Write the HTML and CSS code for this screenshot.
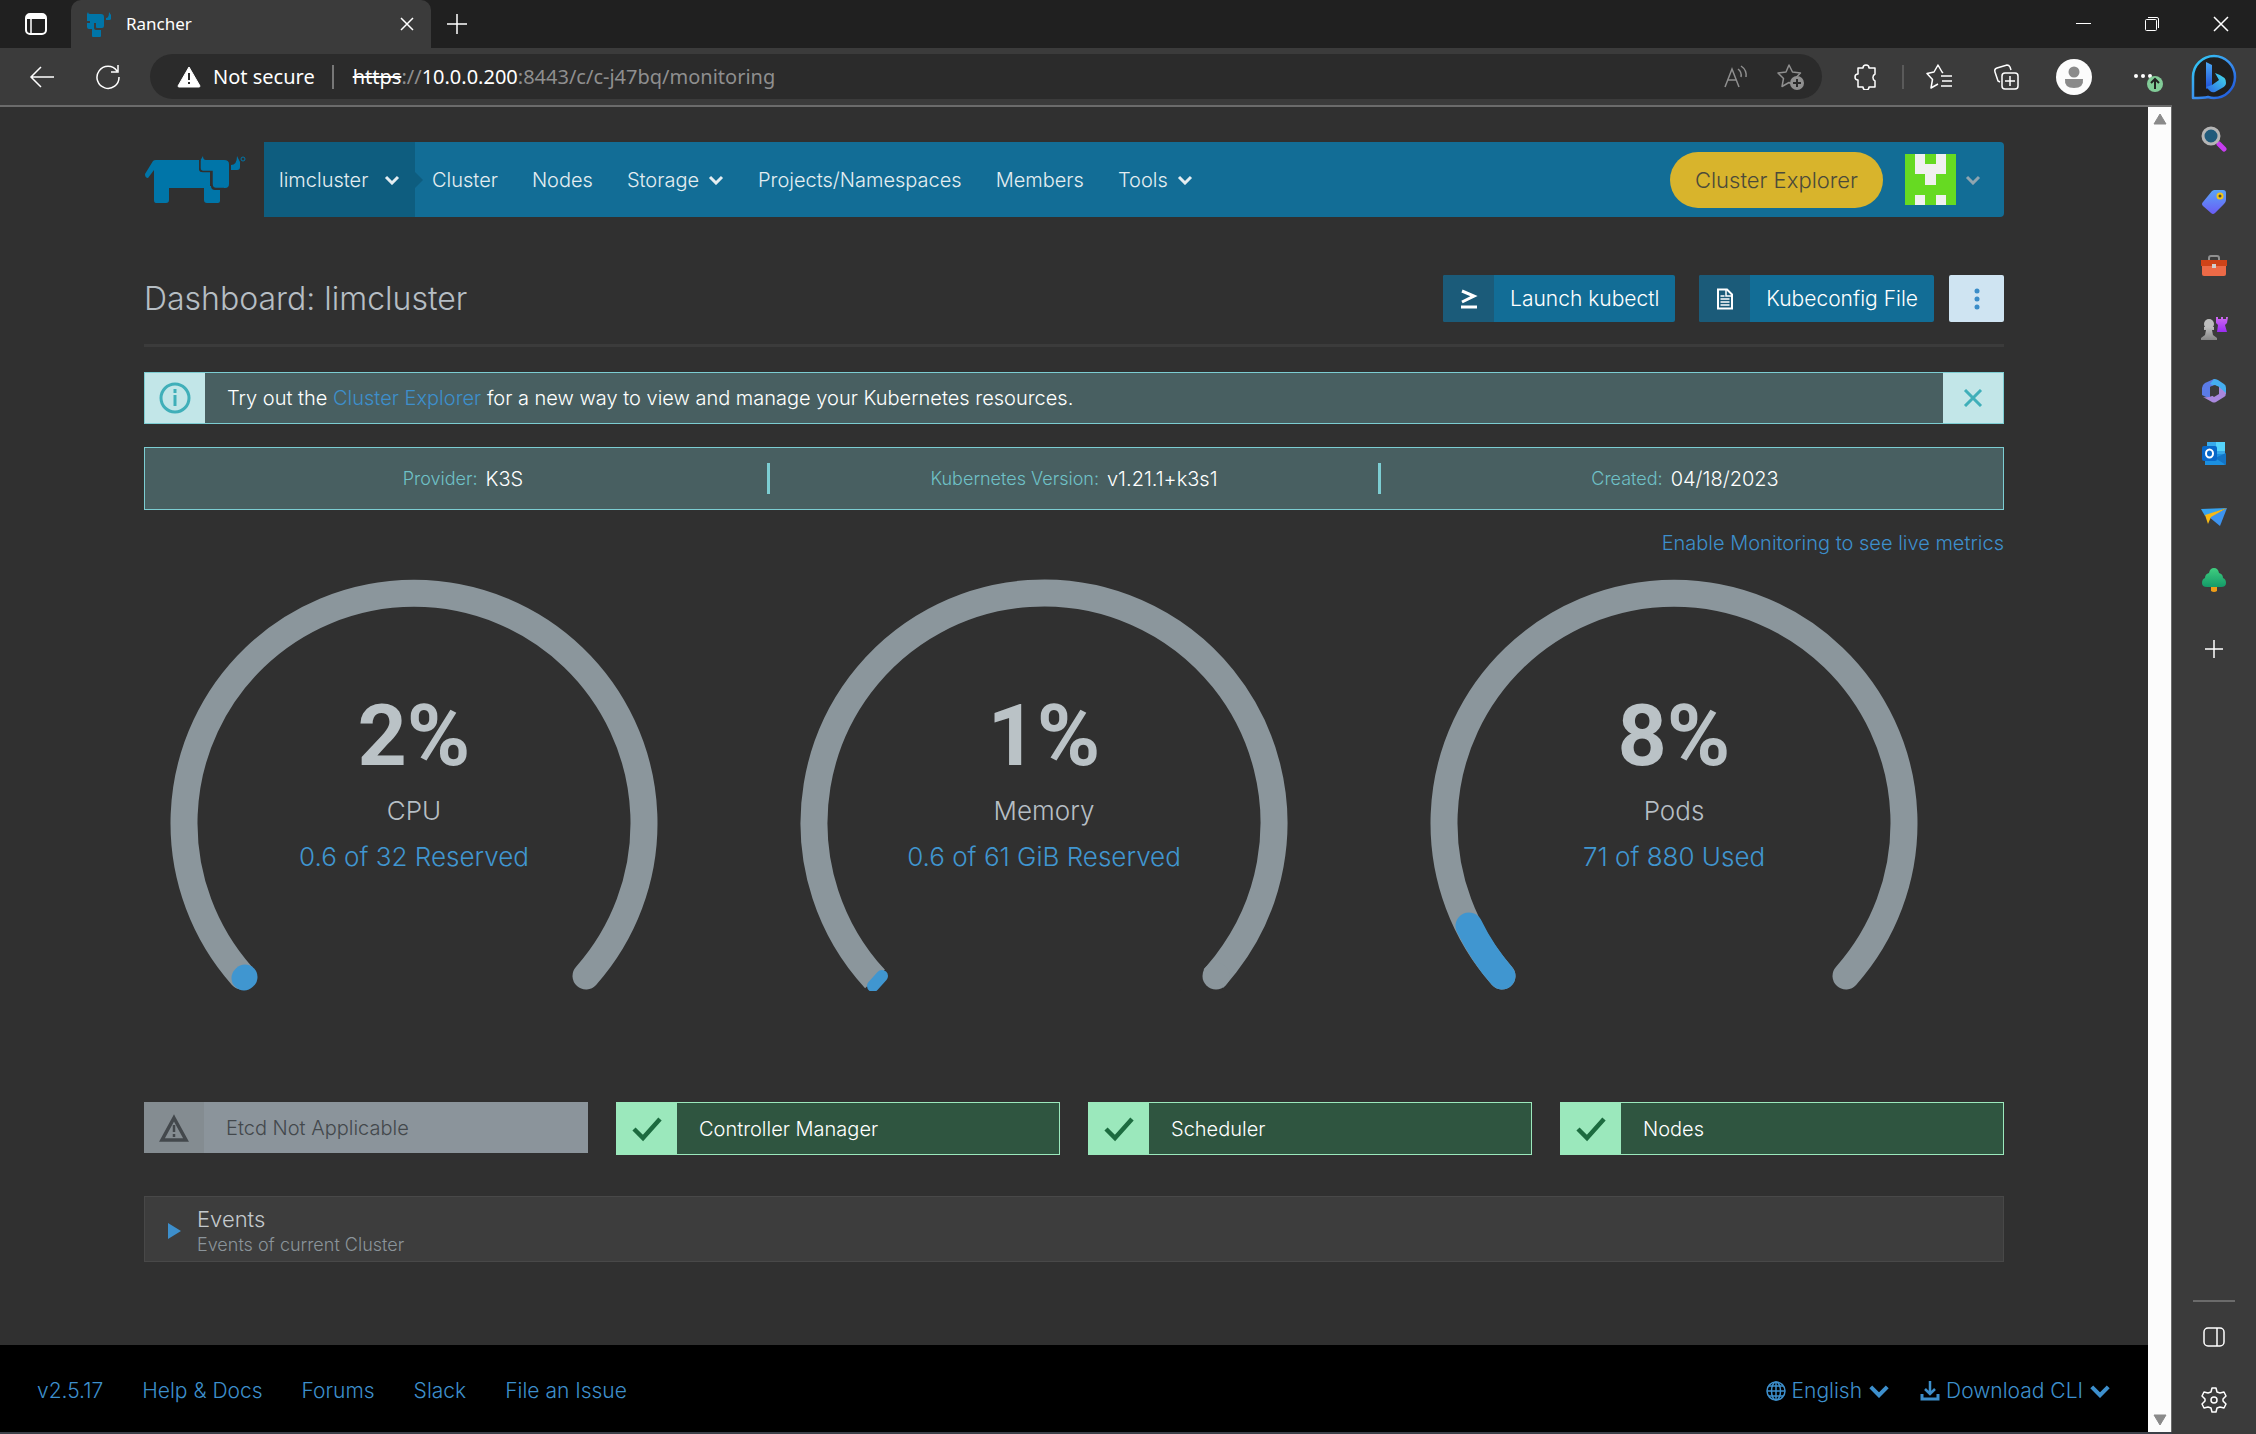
FILE: index.html
```html
<!DOCTYPE html>
<html lang="en">
<head>
<meta charset="utf-8">
<title>Rancher</title>
<link rel="stylesheet" href="styles.css">
</head>
<body>
<svg class="defs" aria-hidden="true">
  <defs>
    <linearGradient id="bing-ring" x1="0" y1="0" x2="1" y2="1"><stop offset="0" stop-color="#2fd0f5"/><stop offset=".5" stop-color="#3b93ef"/><stop offset="1" stop-color="#1a4fd8"/></linearGradient>
    <linearGradient id="bing-b" x1="0" y1="0" x2="0" y2="1"><stop offset="0" stop-color="#4aa8f5"/><stop offset="1" stop-color="#1f4fd6"/></linearGradient>
    <linearGradient id="bing-c" x1="0" y1="1" x2="1" y2="0"><stop offset="0" stop-color="#2a64e6"/><stop offset="1" stop-color="#45e0ea"/></linearGradient>
    <linearGradient id="tag-fill" x1="0" y1="0" x2="0" y2="1"><stop offset="0" stop-color="#5aa4f8"/><stop offset="1" stop-color="#6a5cf5"/></linearGradient>
    <linearGradient id="rook-fill" x1="0" y1="0" x2="0" y2="1"><stop offset="0" stop-color="#cf6bf0"/><stop offset="1" stop-color="#9a2cf2"/></linearGradient>
    <linearGradient id="pawn-fill" x1="0" y1="0" x2="0" y2="1"><stop offset="0" stop-color="#bdbdbd"/><stop offset="1" stop-color="#858585"/></linearGradient>
    <linearGradient id="tree-fill" x1="0" y1="0" x2="0" y2="1"><stop offset="0" stop-color="#3fce7f"/><stop offset="1" stop-color="#149a68"/></linearGradient>
    <symbol id="chevron" viewBox="0 0 16 10"><path d="M2 2l6 6 6-6" fill="none" stroke="currentColor" stroke-width="3"/></symbol>
    <symbol id="check" viewBox="0 0 30 26"><path d="M2 13l9 9L28 3" fill="none" stroke="currentColor" stroke-width="4.500"/></symbol>
  </defs>
</svg>

<header class="tabstrip">
  <button class="icon-btn tab-menu" aria-label="Tab actions"><svg width="22" height="22" viewBox="0 0 22 22"><rect x="1" y="1" width="20" height="20" rx="4" fill="none" stroke="#fff" stroke-width="2"/><path d="M1 2h20v4H1z" fill="#fff"/><path d="M6 6v14" stroke="#fff" stroke-width="1.500"/></svg></button>
  <div class="tab">
    <svg width="25" height="25" viewBox="0 0 25 25" fill="#0075a8"><path d="M2 0q0 2 2 2h11q3 0 3 3v9q0 2-2 2h-5q-1 0-1-1v-4H4V9H1V2z"/><path d="M1 11h7v5q0 2 2 2h5v6q0 1-1 1H7q-1 0-1-1v-7H3q-2 0-2-2z"/><path d="M20 6q3 0 3-6l2 3v4q0 1-2 1h-3z"/></svg>
    <span class="tab-title">Rancher</span>
    <button class="icon-btn" aria-label="Close tab"><svg width="14" height="14" viewBox="0 0 14 14"><path d="M1 1l12 12M13 1L1 13" stroke="#fff" stroke-width="1.500"/></svg></button>
  </div>
  <button class="icon-btn new-tab" aria-label="New tab"><svg width="22" height="22" viewBox="0 0 22 22"><path d="M11 1v20M1 11h20" stroke="#fff" stroke-width="1.500"/></svg></button>
  <div class="window-controls">
    <button class="icon-btn" aria-label="Minimize"><svg width="16" height="16" viewBox="0 0 16 16"><path d="M1 7.500h15" stroke="#fff"/></svg></button>
    <button class="icon-btn" aria-label="Restore"><svg width="16" height="16" viewBox="0 0 16 16" fill="none" stroke="#fff"><rect x="1.500" y="3.500" width="11" height="11" rx="1"/><path d="M4 1.500h9q1.500 0 1.500 1.500v9"/></svg></button>
    <button class="icon-btn" aria-label="Close"><svg width="16" height="16" viewBox="0 0 16 16"><path d="M1 1l14 14M15 1L1 15" stroke="#fff" stroke-width="1.500"/></svg></button>
  </div>
</header>

<div class="workspace">
  <div class="browser">
    <div class="toolbar">
      <button class="icon-btn" aria-label="Back"><svg width="26" height="24" viewBox="0 0 26 24"><path d="M13 2L3 12l10 10M3 12h23" fill="none" stroke="#fff" stroke-width="1.500"/></svg></button>
      <button class="icon-btn reload" aria-label="Reload"><svg width="26" height="26" viewBox="0 0 26 26"><path d="M22 7A11 11 0 1 0 24 13M23 1v7h-7" fill="none" stroke="#fff" stroke-width="1.500"/></svg></button>
      <div class="omnibox">
        <svg width="24" height="22" viewBox="0 0 24 22"><path d="M12 1L23 20q0 1-1 1H2q-1 0-1-1z" fill="#fff" stroke="#fff" stroke-linejoin="round"/><path d="M12 7v7M12 16v2" stroke="#2b2b2b" stroke-width="2"/></svg>
        <span class="insecure">Not secure</span>
        <span class="vbar"></span>
        <span class="url"><s>https</s><span class="dim">://</span>10.0.0.200<span class="dim">:8443/c/c-j47bq/monitoring</span></span>
        <button class="icon-btn dim" aria-label="Read aloud"><svg width="26" height="24" viewBox="0 0 26 24" fill="none" stroke="currentColor" stroke-width="1.500"><path d="M2 22L9 4l7 18M5 15h8M15 4q4 3 3 8M18 1q6 4 5 11"/></svg></button>
        <button class="icon-btn dim" aria-label="Add to favorites"><svg width="28" height="26" viewBox="0 0 28 26"><path d="M13 1l3.500 7 8 1-5.500 5.500 1 8-7-4-7 4 1.500-8L2 9l8-1z" fill="none" stroke="currentColor" stroke-width="1.500" stroke-linejoin="round"/><circle cx="21" cy="19" r="7" fill="currentColor"/><path d="M21 15v8M17 19h8" stroke="#2b2b2b" stroke-width="2"/></svg></button>
      </div>
      <button class="icon-btn" aria-label="Extensions"><svg width="26" height="26" viewBox="0 0 26 26"><path d="M5 4h5a3 3 0 0 1 6 0h6v6a4 4 0 0 0 0 7v6h-6a3 3 0 0 1-6 0H5v-7a3 3 0 0 1 0-6z" fill="none" stroke="#fff" stroke-width="1.500" stroke-linejoin="round"/></svg></button>
      <span class="vbar thin"></span>
      <button class="icon-btn" aria-label="Favorites"><svg width="26" height="26" viewBox="0 0 26 26" fill="none" stroke="#fff" stroke-width="1.500" stroke-linejoin="round"><path d="M17 9l-1-1-4-7-4 7-7 1.500 5.500 6-1.500 8.500 7-4M15 12h11M16 17h10M15 22h11"/></svg></button>
      <button class="icon-btn" aria-label="Collections"><svg width="26" height="26" viewBox="0 0 26 26" fill="none" stroke="#fff" stroke-width="1.500"><rect x="9" y="9" width="16" height="16" rx="3"/><path d="M17 12v10M12 17h10M18 6l-1-3q-1-2-3-2L4 4Q1 5 2 8l3 9 2 1"/></svg></button>
      <button class="icon-btn" aria-label="Profile"><svg width="36" height="36" viewBox="0 0 36 36"><circle cx="18" cy="18" r="18" fill="#fcfcfc"/><circle cx="18" cy="13" r="5.500" fill="#8a8a8a"/><path d="M9 20h18q1 9-9 9t-9-9z" fill="#8a8a8a"/></svg></button>
      <button class="icon-btn" aria-label="Settings and more"><svg width="32" height="32" viewBox="0 0 32 32"><g fill="#fff"><circle cx="5" cy="15" r="2"/><circle cx="12" cy="15" r="2"/><circle cx="19" cy="15" r="2"/></g><circle cx="24" cy="23" r="8" fill="#82cc98"/><path d="M24 28V19M20 22l4-4 4 4" fill="none" stroke="#222" stroke-width="2"/></svg></button>
    </div>

    <div class="viewport">
      <div class="page">
        <div class="container">
          <header class="masthead">
            <a class="logo" href="#" aria-label="Rancher"><svg width="102" height="48" viewBox="0 0 102 48"><g fill="#0075a8"><path d="M0 18L8 5q1-1 3-1h43v9q0 3 3 3h8v14q0 2 0 2H24v12q0 3-3 3H11q-2 0-2-3V14l-6 8q-3 0-3-4z"/><path d="M58 0q0 4 3 4h18q5 0 5 4v20q0 4-4 4H70q-3 0-3-4V15H58q-3 0-3-3V5z"/><path d="M59 30h7q0 4 4 4h5v11q0 2-2 2H62q-3 0-3-3z"/><path d="M86 9q6 0 6-9l3 6v5q0 3-3 3h-6z"/></g><path d="M55 4v8q0 3.500 3 3.500h9V28q0 4.500 4 4.500h8" fill="none" stroke="#303030" stroke-width="1.500"/><circle cx="98" cy="3" r="2" fill="none" stroke="#0075a8"/></svg></a>
            <nav class="nav">
              <button class="cluster-switch">limcluster <svg class="chev"><use href="#chevron"/></svg></button>
              <a href="#">Cluster</a>
              <a href="#">Nodes</a>
              <button>Storage <svg class="chev"><use href="#chevron"/></svg></button>
              <a href="#">Projects/Namespaces</a>
              <a href="#">Members</a>
              <button>Tools <svg class="chev"><use href="#chevron"/></svg></button>
              <a class="explorer" href="#">Cluster Explorer</a>
              <button class="user" aria-label="User menu"><svg width="51" height="51" viewBox="0 0 5 5" shape-rendering="crispEdges"><path d="M0 0h5v5H0z" fill="#66da22"/><path d="M1 0h1v1h1V0h1v2H3v1H2V2H1zM1 4h1v1H1zM3 4h1v1H3z" fill="#f0f0f0"/></svg><svg class="chev muted"><use href="#chevron"/></svg></button>
            </nav>
          </header>

          <section class="title-row">
            <h1>Dashboard: limcluster</h1>
            <button class="action"><span class="action-icon"><svg width="18" height="20" viewBox="0 0 18 20"><path d="M2 2l12 5-12 6M1 18h16" fill="none" stroke="#fff" stroke-width="3"/></svg></span><span class="action-text">Launch kubectl</span></button>
            <button class="action"><span class="action-icon"><svg width="18" height="22" viewBox="0 0 18 22"><path d="M2 1.500h9l5 5v14H2z" fill="none" stroke="#fff" stroke-width="2"/><path d="M10 1v7h6M4.500 11h9M4.500 14h9M4.500 17h9M4.500 8h4" fill="none" stroke="#fff" stroke-width="1.500"/></svg></span><span class="action-text">Kubeconfig File</span></button>
            <button class="more" aria-label="More actions"><svg width="6" height="22" viewBox="0 0 6 22" fill="#3a8cc8"><circle cx="3" cy="3" r="2.500"/><circle cx="3" cy="11" r="2.500"/><circle cx="3" cy="19" r="2.500"/></svg></button>
          </section>

          <section class="banner">
            <span class="banner-side"><svg width="32" height="32" viewBox="0 0 32 32" fill="none" stroke="#3fafb9" stroke-width="3"><circle cx="16" cy="16" r="14"/><path d="M16 13v11M16 7v4"/></svg></span>
            <p>Try out the <a href="#">Cluster Explorer</a> for a new way to view and manage your Kubernetes resources.</p>
            <button class="banner-side" aria-label="Dismiss"><svg width="20" height="18" viewBox="0 0 20 18"><path d="M2 1l16 16M18 1L2 17" stroke="#3fafb9" stroke-width="3"/></svg></button>
          </section>

          <dl class="facts">
            <div><dt>Provider:</dt><dd>K3S</dd></div>
            <div><dt>Kubernetes Version:</dt><dd>v1.21.1+k3s1</dd></div>
            <div><dt>Created:</dt><dd>04/18/2023</dd></div>
          </dl>

          <p class="monitoring"><a href="#">Enable Monitoring to see live metrics</a></p>

          <section class="gauges">
            <div class="gauge">
              <svg viewBox="0 0 488 412"><path class="track" d="M72 397A230 230 0 1 1 416 397"/><path d="M74 399L75 398" stroke="#4096d0" stroke-width="25" stroke-linecap="round"/></svg>
              <div class="gauge-text"><strong>2%</strong><span>CPU</span><span class="used">0.6 of 32 Reserved</span></div>
            </div>
            <div class="gauge">
              <svg viewBox="0 0 488 412"><path class="track butt" d="M75 400A230 230 0 1 1 244 474"/><path class="hole" d="M414 400A230 230 0 0 1 244 474"/><path class="track" d="M400 412L416 397" visibility="hidden"/><circle cx="416" cy="397" r="13.500" fill="#8b969c"/><path d="M73 407L82 397" stroke="#4096d0" stroke-width="12" stroke-linecap="round"/></svg>
              <div class="gauge-text"><strong>1%</strong><span>Memory</span><span class="used">0.6 of 61 GiB Reserved</span></div>
            </div>
            <div class="gauge">
              <svg viewBox="0 0 488 412"><path class="track" d="M72 397A230 230 0 1 1 416 397"/><path class="track fill" d="M72 397A230 230 0 0 1 39 347"/></svg>
              <div class="gauge-text"><strong>8%</strong><span>Pods</span><span class="used">71 of 880 Used</span></div>
            </div>
          </section>

          <section class="statuses">
            <div class="status off"><span class="status-icon"><svg width="30" height="28" viewBox="0 0 30 28"><path d="M15 4L27 26H3z" fill="none" stroke="#43484c" stroke-width="3.500"/><path d="M15 11v7M15 20v3" stroke="#43484c" stroke-width="2.500"/></svg></span><span>Etcd Not Applicable</span></div>
            <div class="status"><span class="status-icon"><svg width="30" height="26"><use href="#check"/></svg></span><span>Controller Manager</span></div>
            <div class="status"><span class="status-icon"><svg width="30" height="26"><use href="#check"/></svg></span><span>Scheduler</span></div>
            <div class="status"><span class="status-icon"><svg width="30" height="26"><use href="#check"/></svg></span><span>Nodes</span></div>
          </section>

          <button class="events">
            <svg width="13" height="16" viewBox="0 0 13 16"><path d="M0 0l13 8-13 8z" fill="#3d8fcc"/></svg>
            <span class="events-text"><span class="events-title">Events</span><span class="events-sub">Events of current Cluster</span></span>
          </button>
        </div>

        <footer class="footer">
          <a href="#">v2.5.17</a>
          <a href="#">Help &amp; Docs</a>
          <a href="#">Forums</a>
          <a href="#">Slack</a>
          <a href="#">File an Issue</a>
          <button class="push"><svg width="20" height="20" viewBox="0 0 20 20" fill="none" stroke="currentColor" stroke-width="1.500"><circle cx="10" cy="10" r="9"/><ellipse cx="10" cy="10" rx="4.500" ry="9"/><path d="M10 1v18M1 10h18M3 5h14M3 15h14"/></svg>English <svg class="chev big"><use href="#chevron"/></svg></button>
          <button><svg width="20" height="20" viewBox="0 0 20 20" fill="none" stroke="currentColor"><path d="M10 0v12M5 8l5 5 5-5" stroke-width="2.500"/><path d="M2 13v5h16v-5" stroke-width="3"/></svg>Download CLI <svg class="chev big"><use href="#chevron"/></svg></button>
        </footer>
      </div>
      <div class="scrollbar" aria-hidden="true">
        <svg width="14" height="12" viewBox="0 0 14 12"><path d="M7 1l6 10H1z" fill="#8a8a8a" stroke="#8a8a8a" stroke-linejoin="round"/></svg>
        <svg width="14" height="12" viewBox="0 0 14 12"><path d="M7 11l6-10H1z" fill="#8a8a8a" stroke="#8a8a8a" stroke-linejoin="round"/></svg>
      </div>
    </div>
  </div>

  <aside class="sidebar">
    <button class="icon-btn bing" aria-label="Discover"><svg width="46" height="46" viewBox="0 0 46 46"><path d="M2 44V23A21 21 0 1 1 23 44q-3 0-6-1-4 1-15 1z" fill="#1f1f1f" stroke="url(#bing-ring)" stroke-width="2.500" stroke-linejoin="round"/><path d="M15 8l6 3v21l-6 3z" fill="url(#bing-b)"/><path d="M15 33l6-2 7-5-4-7q12 4 11 10 0 3-4 5l-7 4q-3 1-5-1z" fill="url(#bing-c)"/></svg></button>
    <button class="icon-btn" aria-label="Search"><svg width="26" height="26" viewBox="0 0 26 26"><path d="M18 18l5 5" stroke="#c73df0" stroke-width="5" stroke-linecap="round"/><circle cx="10" cy="10" r="8" fill="#215b7b" stroke="#b5b5b5" stroke-width="3"/></svg></button>
    <button class="icon-btn" aria-label="Shopping"><svg width="26" height="26" viewBox="0 0 26 26"><path d="M13 1h9q3 0 3 3v7q0 2-2 4l-9 9q-2 2-4 0l-8-7q-2-2 0-4L11 2z" fill="url(#tag-fill)"/><circle cx="19" cy="7" r="2.500" fill="#444" stroke="#f2c515" stroke-width="2"/></svg></button>
    <button class="icon-btn" aria-label="Tools"><svg width="28" height="26" viewBox="0 0 28 26"><path d="M9 9V6q0-2 2-2h6q2 0 2 2v3" fill="none" stroke="#8f8f8f" stroke-width="2"/><path d="M2 13h24v9q0 2-2 2H4q-2 0-2-2z" fill="#ec6a47"/><path d="M1 8h26v6H1z" fill="#cf4318"/><path d="M12 12h4v4h-4z" fill="#d0d0d0"/></svg></button>
    <button class="icon-btn" aria-label="Games"><svg width="28" height="26" viewBox="0 0 28 26"><path d="M16 2h2v2h3V2h2v2h3V2h2l-1 6-2 2 2 7H17l1-7-2-2z" fill="url(#rook-fill)"/><circle cx="9" cy="9" r="5" fill="#bdbdbd"/><path d="M4 12h10v3h-2l1 5 4 3v2H1v-2l4-3 1-5H4z" fill="url(#pawn-fill)"/></svg></button>
    <button class="icon-btn" aria-label="Microsoft 365"><svg width="26" height="26" viewBox="0 0 26 26"><path d="M13 1L4 5Q1 7 1 10v7l8 4V9l5-2z" fill="#5b7be6"/><path d="M13 1q2 0 4 1l6 4q2 1 2 4v6l-7-3V9l-9-3z" fill="#45aef0"/><path d="M25 15q0 3-2 4l-8 5q-2 1-4 0l-9-5q5 1 9-1l7-4V9z" fill="#a988dd"/><path d="M9 9l5-2 4 2v7l-5 3-4-3z" fill="#3b3b3b"/></svg></button>
    <button class="icon-btn" aria-label="Outlook"><svg width="26" height="26" viewBox="0 0 26 26"><path d="M6 1h18v16H6z" fill="#37a9ea"/><path d="M15 1h9v9h-9z" fill="#55d3fa"/><path d="M4 24V13l21 0v9q0 2-2 2z" fill="#1b8fe0"/><path d="M25 12v12L14 17z" fill="#1373c4"/><rect x="1" y="5" width="15" height="15" rx="2" fill="#0867c8"/><ellipse cx="8.500" cy="12.500" rx="3.500" ry="4" fill="none" stroke="#fff" stroke-width="2"/></svg></button>
    <button class="icon-btn" aria-label="Drop"><svg width="28" height="26" viewBox="0 0 28 26"><path d="M1 5L27 4 5 12z" fill="#36a3f0"/><path d="M27 4L9 13l11 9z" fill="#3d93ee"/><path d="M5 11L27 4 11 13 8 20z" fill="#f5b916"/></svg></button>
    <button class="icon-btn" aria-label="Tree"><svg width="26" height="26" viewBox="0 0 26 26"><path d="M10 18h6v6q-3 2-6 0z" fill="#ee9d17"/><path d="M13 1q4 0 5 5 4 1 4 5 3 1 3 5t-5 4H6q-5 0-5-4t3-5q0-4 4-5 1-5 5-5z" fill="url(#tree-fill)"/></svg></button>
    <button class="icon-btn add" aria-label="Customize"><svg width="18" height="18" viewBox="0 0 18 18"><path d="M9 0v18M0 9h18" stroke="#fff" stroke-width="1.500"/></svg></button>
    <div class="sidebar-end">
      <button class="icon-btn" aria-label="Hide sidebar"><svg width="22" height="20" viewBox="0 0 22 20" fill="none" stroke="#fff" stroke-width="1.500"><rect x="1" y="1" width="20" height="18" rx="4"/><path d="M14 1v18"/></svg></button>
      <button class="icon-btn" aria-label="Settings"><svg width="26" height="26" viewBox="0 0 26 26" fill="none" stroke="#fff" stroke-width="1.500" stroke-linejoin="round"><path d="M11 1h4l1 4 3 1 4-1 2 4-3 3v2l3 3-2 4-4-1-3 1-1 4h-4l-1-4-3-1-4 1-2-4 3-3v-2L1 9l2-4 4 1 3-1z"/><circle cx="13" cy="13" r="3"/></svg></button>
    </div>
  </aside>
</div>
</body>
</html>
```
FILE: styles.css
```css
* { box-sizing: border-box; }

body {
  margin: 0;
  min-height: 100vh;
  display: flex;
  flex-direction: column;
  background: #3b3b3b;
  color: #fff;
  font-family: "Inter", "Open Sans", sans-serif;
  font-weight: 300;
  font-size: 20px;
  line-height: 24px;
}

h1, p, dl, dd { margin: 0; }
a { color: #3d8fcc; text-decoration: none; }
button { border: 0; margin: 0; padding: 0; background: none; color: inherit; font: inherit; cursor: pointer; }
svg { display: block; flex: none; }
.defs { position: absolute; width: 0; height: 0; }
.icon-btn { display: flex; align-items: center; justify-content: center; }
.chev { width: 16px; height: 10px; }
.chev.big { width: 22px; height: 14px; }
.chev.muted { color: #8fa5b0; }

/* Browser frame */
.tabstrip {
  display: flex;
  align-items: center;
  height: 48px;
  background: #202020;
  font-family: "Noto Sans", sans-serif;
  font-weight: 400;
}
.tab-menu { width: 71px; }
.tab {
  display: flex;
  align-items: center;
  gap: 15px;
  width: 360px;
  height: 48px;
  padding: 0 17px 0 15px;
  background: #3b3b3b;
  border-radius: 10px 10px 0 0;
}
.tab-title { flex: 1; font-size: 17px; }
.new-tab { width: 52px; }
.window-controls { display: flex; gap: 53px; margin-left: auto; padding-right: 27px; }

.workspace { flex: 1; display: flex; }
.browser { flex: 1; display: flex; flex-direction: column; }
.toolbar {
  display: flex;
  align-items: center;
  height: 59px;
  padding: 0 9px 0 28px;
  border-bottom: 2px solid #6b6b6b;
  font-family: "Noto Sans", sans-serif;
  font-weight: 400;
}
.toolbar > .icon-btn { min-width: 26px; }
.toolbar .reload { margin: 0 29px 0 41px; }
.omnibox {
  flex: 1;
  display: flex;
  align-items: center;
  height: 45px;
  padding: 0 18px 0 27px;
  border-radius: 23px;
  background: #2b2b2b;
}
.insecure { margin-left: 12px; }
.vbar { width: 2px; height: 24px; margin: 0 19px 0 17px; background: #777; }
.vbar.thin { margin: 0 22px 0 23px; background: #5a5a5a; }
.url { flex: 1; }
.dim { color: #8f8f8f; }
.omnibox .icon-btn + .icon-btn { margin-left: 27px; }
.omnibox + .icon-btn { margin-left: 31px; }
.vbar + .icon-btn { margin-right: 41px; }
.vbar + .icon-btn + .icon-btn { margin-right: 37px; }
.vbar + .icon-btn + .icon-btn + .icon-btn { margin-right: 39px; }

.viewport { flex: 1; display: flex; border-bottom: 2px solid #3c4048; }
.page { flex: 1; display: flex; flex-direction: column; background: #303030; }
.scrollbar {
  display: flex;
  flex-direction: column;
  justify-content: space-between;
  align-items: center;
  width: 24px;
  padding: 6px 0;
  background: #fcfcfc;
  border-right: 1px solid #6b6b6b;
}

.sidebar {
  display: flex;
  flex-direction: column;
  align-items: center;
  width: 84px;
  padding: 6px 0 21px;
}
.sidebar .icon-btn { height: 26px; margin-bottom: 37px; }
.sidebar .bing { height: 46px; margin-bottom: 26px; }
.sidebar .add { margin-top: 6px; }
.sidebar-end {
  display: flex;
  flex-direction: column;
  align-items: center;
  margin-top: auto;
  padding: 22px 8px 0;
  border-top: 2px solid #6b6b6b;
}
.sidebar .sidebar-end .icon-btn:last-child { margin-bottom: 0; }

/* Page */
.container { padding: 35px 144px 83px; }
.masthead { display: flex; align-items: center; }
.logo { width: 120px; padding-left: 1px; }
.nav {
  flex: 1;
  display: flex;
  align-items: center;
  gap: 34px;
  height: 75px;
  padding-right: 23px;
  border-radius: 0 4px 4px 0;
  background: #126d96;
}
.nav a, .nav button { display: flex; align-items: center; gap: 9px; color: #e4edf1; font-weight: 300; }
.nav .cluster-switch {
  position: relative;
  justify-content: space-between;
  width: 151px;
  height: 75px;
  margin-right: -17px;
  padding: 0 15px;
  background: #0e5d7f;
}
.cluster-switch::after {
  content: "";
  position: absolute;
  left: 100%;
  top: 30px;
  border: 8px solid transparent;
  border-left-color: #0e5d7f;
}
.nav .explorer {
  margin-left: auto;
  margin-right: -12px;
  padding: 0 25px;
  height: 56px;
  border-radius: 28px;
  background: #d8b42c;
  color: #4b4a3a;
  font-size: 22px;
}

.title-row {
  display: flex;
  align-items: center;
  padding: 58px 0 22px;
  border-bottom: 3px solid #3b3b3b;
}
.title-row h1 { flex: 1; color: #b6bec4; font-size: 32px; line-height: 44px; font-weight: 300; }
.action {
  display: flex;
  align-items: center;
  height: 47px;
  margin-right: 24px;
  border-radius: 2px;
  background: #126d96;
  font-size: 21px;
  overflow: hidden;
}
.action-icon { display: flex; align-items: center; justify-content: center; width: 51px; height: 47px; background: #1b5b79; }
.action-text { padding: 0 16px; }
.action + .more { margin-left: -9px; }
.more { display: flex; align-items: center; justify-content: center; width: 55px; height: 47px; border-radius: 2px; background: #cfe4f2; }

.banner {
  display: flex;
  align-items: center;
  height: 52px;
  margin-top: 25px;
  border: 1px solid #7ccdd2;
  background: #485f61;
}
.banner p { flex: 1; padding-left: 22px; }
.banner-side { display: flex; align-items: center; justify-content: center; width: 60px; height: 50px; background: #c2e6e8; }

.facts {
  display: flex;
  align-items: center;
  height: 63px;
  margin-top: 23px;
  padding: 0 14px;
  border: 1px solid #7ccdd2;
  background: #485f61;
}
.facts div { flex: 1; display: flex; align-items: center; justify-content: center; gap: 8px; height: 31px; }
.facts div + div { border-left: 3px solid #7ccdd2; }
.facts dt { color: #6fc1c7; font-size: 18px; }

.monitoring { padding: 21px 0 24px; text-align: right; }

.gauges { display: grid; grid-template-columns: repeat(3, 1fr); gap: 90px; padding-right: 60px; }
.gauge { display: grid; justify-items: center; }
.gauge svg, .gauge-text { grid-area: 1 / 1; }
.gauge svg { width: 488px; height: 412px; }
.track { fill: none; stroke: #8b969c; stroke-width: 27px; stroke-linecap: round; }
.track.butt { stroke-linecap: butt; }
.track.fill { stroke: #4096d0; }
.hole { fill: none; stroke: #303030; stroke-width: 30px; }
.gauge-text { display: flex; flex-direction: column; align-items: center; padding-top: 113px; color: #b6bec4; font-size: 26px; line-height: 46px; }
.gauge-text strong { margin-bottom: 8px; font-family: "Roboto", sans-serif; font-size: 86px; line-height: 88px; font-weight: 700; color: #bac2c6; }
.used { color: #4096d0; }

.statuses { display: grid; grid-template-columns: repeat(4, 1fr); gap: 28px; align-items: start; margin-top: 111px; }
.status { display: flex; align-items: center; gap: 22px; border: 1px solid #9be8bc; background: #2f5540; }
.status-icon { display: flex; align-items: center; justify-content: center; width: 60px; height: 51px; background: #9be8bc; color: #1c6b3f; }
.status.off { border: 0; background: #8b949b; color: #43484c; }
.status.off .status-icon { background: #848c91; }

.events {
  display: flex;
  align-items: center;
  gap: 16px;
  width: 100%;
  height: 66px;
  margin-top: 41px;
  padding: 4px 23px 0;
  border: 1px solid #484848;
  background: #3d3d3d;
  text-align: left;
}
.events-text { display: flex; flex-direction: column; }
.events-title { color: #c4c9cc; font-size: 22px; line-height: 28px; }
.events-sub { color: #8b949a; font-size: 18px; line-height: 24px; }

.footer {
  display: flex;
  align-items: center;
  gap: 39px;
  height: 87px;
  margin-top: auto;
  padding: 4px 37px 0;
  background: #000;
  color: #3d8fcc;
  font-size: 21px;
}
.footer button { display: flex; align-items: center; gap: 6px; }
.footer .push { margin-left: auto; margin-right: -9px; }
```
